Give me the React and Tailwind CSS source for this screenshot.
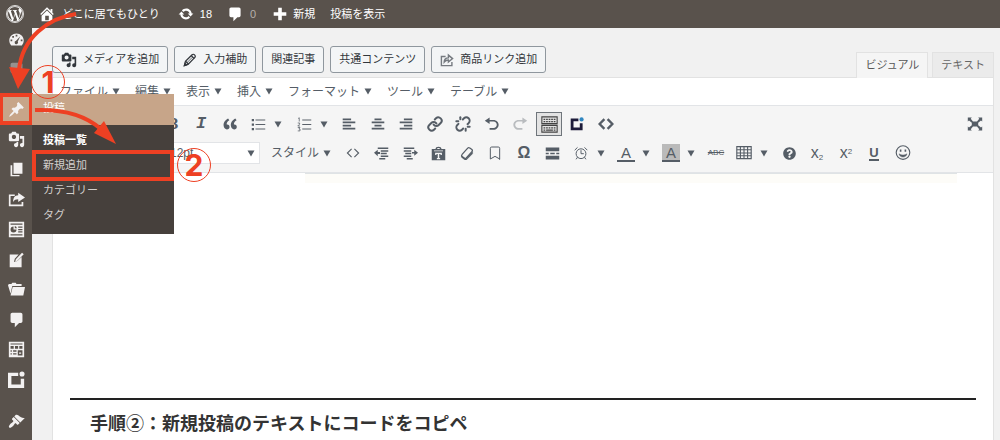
import React from 'react';
import { FaWordpressSimple, FaQuestionCircle } from 'react-icons/fa';
import { Bookmark, Link, Unlink } from 'lucide-react';

const solid = {
    home: 'M16 8.5l1.53 1.53-1.06 1.06L10 4.6l-6.47 6.49-1.06-1.06L10 2.5l4 4v-2h2v4zm-6-2.46l6 5.99V18H4v-5.97zM12 17v-5H8v5h4z',
    update: 'M10.2 3.28c3.53 0 6.43 2.61 6.92 6h2.08l-3.5 4-3.5-4h2.32c-.45-1.97-2.21-3.45-4.32-3.45-1.45 0-2.73.71-3.54 1.78L4.95 5.66C6.23 4.2 8.11 3.28 10.2 3.28zm-.4 13.44c-3.52 0-6.43-2.61-6.92-6H.8l3.5-4 3.5 4H5.48c.45 1.97 2.21 3.45 4.32 3.45 1.45 0 2.73-.71 3.54-1.78l1.71 1.95c-1.28 1.46-3.15 2.38-5.25 2.38z',
    comment: 'M5 2h10c1.1 0 2 .9 2 2v8c0 1.1-.9 2-2 2h-2l-5 5v-5H5c-1.1 0-2-.9-2-2V4c0-1.1.9-2 2-2z',
    plus: 'M8 3h4v5h5v4h-5v5H8v-5H3V8h5z',
    dashboard: 'M3.76 17h12.48c1.34-1.51 2.26-3.5 2.26-5.71C18.5 6.7 14.7 3 10 3S1.5 6.7 1.5 11.29c0 2.21.92 4.2 2.26 5.71zM9 4.5h2v2H9zM5 6h2v2H5zM3 10h2v2H3zM15 10h2v2h-2zM14.5 6.2l-3 6.2a2 2 0 1 1-2-.9z',
    pin: 'M10.44 3.02l1.82-1.82 6.36 6.35-1.83 1.82c-1.05-.68-2.48-.57-3.41.36l-.75.75c-.92.93-1.04 2.35-.35 3.41l-1.83 1.82-2.41-2.41-2.8 2.79c-.42.42-3.38 2.71-3.8 2.29s1.86-3.39 2.28-3.81l2.79-2.79L4.1 9.36l1.83-1.82c1.05.69 2.48.57 3.4-.36l.75-.75c.93-.92 1.05-2.35.36-3.41z',
    media: 'M13 11V4c0-.55-.45-1-1-1h-1.67L9 1H5L3.67 3H2c-.55 0-1 .45-1 1v7c0 .55.45 1 1 1h10c.55 0 1-.45 1-1zM7 4.5c1.38 0 2.5 1.12 2.5 2.5S8.38 9.5 7 9.5 4.5 8.38 4.5 7 5.62 4.5 7 4.5zM14 6h5v10.5c0 1.38-1.12 2.5-2.5 2.5S14 17.88 14 16.5s1.12-2.5 2.5-2.5c.17 0 .34.02.5.05V9h-3V6zm-4 8.05V13h2v3.5c0 1.38-1.12 2.5-2.5 2.5S7 17.88 7 16.5 8.12 14 9.5 14c.17 0 .34.02.5.05z',
    pages: 'M6.500 15V2h10.500v13zM5 16.500h8.500V18H3V5h2z',
    share: 'M1 4h7v2H3v10h13v-3h2v5H1zM12 2l8 5.500-8 5.500v-3.300c-3 0-4.600.8-6 3.300 0-5 2-7.700 6-7.900z',
    profile: 'M1 1h18v18H1zM3 3v1.500h14V3zM3 15.500V17h14v-1.500zM6.500 6.500a3.500 3.500 0 1 0 3.500 3.500H6.500zM8 6v2.500h2.500A3 3 0 0 0 8 6zM12 6.500v1.500h5V6.500zM12 9.300v1.500h5V9.300zM12 12v1.500h5V12z',
    write: 'M2 4h10.500L8 9l-1 4 4-1.200L16 7v12H2zM9.200 9.800l7.300-7.800 2 1.800-7.500 7.600-2.500.9z',
    folder: 'M0 5l1-1.500h3L5 2h4l1 1.500h6V6H5L3 15zM5.500 7H20l-2 10H3z',
    form: 'M1 1h18v18H1zM3 3v1h14V3zM3 6v3h3.700V6zM8.200 6v3h3.700V6zM13.300 6v3H17V6zM3 11v1.500h1.500V11zM6 11v1.500h4V11zM3 14.500V16h1.500v-1.500zM6 14.500V16h4v-1.500zM11.500 11v6H17v-6zM13 13.500h2.500V15H13z',
    block: 'M0 2h12v4H4v10h11V9h4v11H0zM16.500.5a3 3 0 1 1 0 6 3 3 0 0 1 0-6z',
    brush: 'M14.480 11.060L7.410 3.990l1.500-1.500c.5-.56 2.300-.47 3.510.32 1.210.8 1.430 1.280 2.910 2.100 1.180.64 2.450 1.260 4.450.85zm-.71.71L6.700 4.700 4.930 6.470c-.39.39-.39 1.020 0 1.410l1.060 1.060c.39.39.39 1.030 0 1.420-.6.6-1.430 1.110-2.210 1.690-.35.26-.7.53-1.010.84C1.430 14.230.4 16.080 1.400 17.070c.99 1 2.840-.03 4.180-1.360.31-.31.58-.66.85-1.020.57-.78 1.080-1.610 1.690-2.210.39-.39 1.020-.39 1.410 0l1.060 1.060c.39.39 1.020.39 1.410 0z',
    quote: 'M9.490 13.220c0-.74-.2-1.380-.61-1.900-.62-.78-1.830-.88-2.530-.72-.29-1.650 1.110-3.750 2.920-4.650L7.880 4c-2.730 1.300-5.420 4.280-4.960 8.050C3.210 14.430 4.590 16 6.540 16c.85 0 1.560-.25 2.120-.75s.83-1.180.83-2.030zm8.050 0c0-.74-.2-1.380-.61-1.900-.63-.78-1.830-.88-2.530-.72-.29-1.650 1.110-3.750 2.920-4.650L15.930 4c-2.730 1.300-5.410 4.280-4.950 8.050.29 2.380 1.660 3.950 3.610 3.950.85 0 1.560-.25 2.120-.75s.83-1.180.83-2.030z',
    left: 'M1 2h12v2.500H1zM1 6.500h18V9H1zM1 11h12v2.500H1zM1 15.500h18V18H1z',
    center: 'M5 2h10v2.500H5zM1 6.500h18V9H1zM5 11h10v2.500H5zM1 15.500h18V18H1z',
    right: 'M7 2h12v2.500H7zM1 6.500h18V9H1zM7 11h12v2.500H7zM1 15.500h18V18H1z',
    undo: 'M12 5H7V2L1 6l6 4V7h5c2.200 0 4 1.800 4 4s-1.800 4-4 4H7v2.300h5c3.300 0 6.300-3 6.300-6.300S15.300 5 12 5z',
    redo: 'M8 5h5V2l6 4-6 4V7H8c-2.200 0-4 1.800-4 4s1.800 4 4 4h5v2.300H8c-3.300 0-6.300-3-6.300-6.300S4.700 5 8 5z',
    outdent: 'M5 2h14v2H5zM9 5.500h10v2H9zM9 9h8v2H9zM9 12.500h10v2H9zM7 16h8v2H7zM0 9l5-4v3h3v2.500H5v3z',
    indent: 'M1 2h14v2H1zM1 5.500h10v2H1zM3 9h8v2H3zM1 12.500h10v2H1zM5 16h8v2H5zM20 9l-5 4v-3h-3V8h3V5z',
    paste: 'M1 4h5c.3-2 1.500-3 4-3s3.700 1 4 3h5v15H1zM8 4h4c0-1-.8-1.500-2-1.500S8 3 8 4zM4 6v1h12V6zM5.500 9v3h1.800v-1.200H9V16H7.800v1.500h4.400V16H11v-5.200h1.700V12h1.800V9z',
    more: 'M1 2h18v5H1zM1 9h4v2H1zM7 9h6v2H7zM15 9h4v2h-4zM1 13h18v5H1z',
    expand: 'M1 2h5L4.700 3.300 7.500 7h5l2.800-3.700L14 2h5v5l-1.500-1.500-3.500 3v3l3.500 3L19 13v5h-5l1.300-1.300L12.500 13h-5l-2.800 3.700L6 18H1v-5l1.500 1.500 3.500-3v-3l-3.500-3L1 7z',
};

function Icon({ name, className = 'size-4' }) {
    return (
        <svg viewBox="0 0 20 20" className={className} fill="currentColor" fillRule="evenodd" aria-hidden="true">
            <path d={solid[name]} />
        </svg>
    );
}

// outline icons
function Line({ children, className = 'size-4', width = 1.5 }) {
    return (
        <svg viewBox="0 0 20 20" className={className} fill="none" stroke="currentColor" strokeWidth={width} aria-hidden="true">
            {children}
        </svg>
    );
}

function Caret() {
    return (
        <svg viewBox="0 0 8 7" className="w-2 h-[7px] shrink-0" fill="currentColor" aria-hidden="true">
            <path d="M.5.500h7L4 6.500z" />
        </svg>
    );
}

function Pencil() {
    return (
        <Line className="size-3.5" width={1.8}>
            <path d="M2 18l1.500-6L13 2.500c1-1 2.500-.8 3.500.2s1.500 2.500.5 3.500L7.500 16z" />
            <path d="M12 4l4 4M4 12l4 4M2 18l3-1-2-2z" />
            <path d="M5.500 14l8-8" strokeWidth="1" />
        </Line>
    );
}

function ShareBox() {
    return (
        <Line className="size-3.5 text-[#757a80]" width={2}>
            <path d="M8 5H2v13h15v-5" />
            <path d="M6 13c0-4 2-6 6-6V3l6 5-6 5v-3c-3 0-4.500 1-6 3z" />
        </Line>
    );
}

const bulletList = (
    <Line className="size-[15px]" width={1.3}>
        <path d="M6 4h13M6 10h13M6 16h13" />
        <path d="M1 4h3M1 10h3M1 16h3" strokeWidth="3" />
    </Line>
);

const numberList = (
    <Line className="size-[15px]" width={1.3}>
        <path d="M7 4h12M7 10h12M7 16h12" />
        <path d="M1.500 2L3 1v5M1 8h2.500v1.500L1 12h3M1 14h3l-1.500 2H4v2.500H1" strokeWidth="1" />
    </Line>
);

const keyboard = (
    <span className="flex items-center justify-center w-[26px] h-6 border border-[#6f757b] bg-[#e3e3e3] text-[#444]">
        <Line className="size-[17px]" width={1.3}>
            <path d="M1 1h18v8H1zM1 11h18v8H1z" />
            <path d="M3 4h14M3 6.500h14M3 14h14" strokeDasharray="2 1" strokeWidth="1.500" />
            <path d="M3 16.500h2M6 16.500h8M15 16.500h2" strokeWidth="1.500" />
        </Line>
    </span>
);

const blockLogo = (
    <svg viewBox="0 0 20 20" className="size-3.5" aria-hidden="true">
        <path d="M1 2h11v4H5v9h9V9h4v10H1z" fill="#1d1b3a" />
        <circle cx="16.500" cy="3.500" r="3" fill="#2f86c0" />
    </svg>
);

const angle = (width, size) => (
    <Line className={size} width={width}>
        <path d="M8 4l-6 6 6 6M12 4l6 6-6 6" />
    </Line>
);

const eraser = (
    <Line className="size-3.5" width={1.8}>
        <path d="M3 12l8-9c1-1 2-1 3 0l3 2c1 1 1 2 0 3l-8 9c-1 1-2 1-3 0l-3-2c-1-1-1-2 0-3z" />
        <path d="M2 14l5 4h2l9-10v3l-9 9H7l-5-4z" fill="currentColor" strokeWidth="0.500" />
    </Line>
);

const clock = (
    <Line className="size-3.5" width={1.4}>
        <circle cx="10" cy="11" r="7" />
        <path d="M10 6v5h4M1 6l4-4M19 6l-4-4M5 16l-2 3M15 16l2 3" />
    </Line>
);

const table = (
    <Line className="size-4" width={1.4}>
        <path d="M1 2h18v15H1z" />
        <path d="M1 6h18M1 10h18M1 13.500h18M5.500 2v15M10 2v15M14.500 2v15" />
    </Line>
);

const smile = (
    <Line className="size-4" width={1.4}>
        <circle cx="10" cy="9.500" r="8.500" />
        <path d="M5 11c1 5.500 9 5.500 10 0-3 2-7 2-10 0z" fill="currentColor" strokeWidth="0.500" />
        <path d="M7 5.500v3M13 5.500v3" strokeWidth="2" />
    </Line>
);

const toolbarTop = [
    [
        { label: '太字', icon: <b className="text-base font-serif">B</b> },
        { label: 'イタリック', icon: <b className="text-[17px] italic font-['Liberation_Mono',monospace]">I</b> },
    ],
    [
        { label: '引用', icon: <Icon name="quote" className="size-[18px]" /> },
        { label: '番号なしリスト', icon: bulletList, menu: true },
    ],
    [
        { label: '番号付きリスト', icon: numberList, menu: true },
        { label: '左寄せ', icon: <Icon name="left" className="size-3.5" /> },
    ],
    [
        { label: '中央揃え', icon: <Icon name="center" className="size-3.5" /> },
        { label: '右寄せ', icon: <Icon name="right" className="size-3.5" /> },
    ],
    [
        { label: 'リンク', icon: <Link className="size-4" strokeWidth={3} /> },
        { label: 'リンク解除', icon: <Unlink className="size-4" strokeWidth={3} /> },
    ],
    [
        { label: '取り消し', icon: <Icon name="undo" /> },
        { label: 'やり直し', icon: <Icon name="redo" className="size-4 text-[#b9bcbf]" /> },
    ],
    [
        { label: 'ツールバー切り替え', icon: keyboard },
        { label: 'ブロック', icon: blockLogo },
    ],
    [{ label: 'コード', icon: angle(3, 'size-4') }],
];

const toolbarBottom = [
    [
        { label: 'ソースコード', icon: angle(1.6, 'size-3.5') },
        { label: 'インデントを減らす', icon: <Icon name="outdent" className="size-[15px]" /> },
    ],
    [
        { label: 'インデントを増やす', icon: <Icon name="indent" className="size-[15px]" /> },
        { label: 'テキストとしてペースト', icon: <Icon name="paste" className="size-[15px]" /> },
    ],
    [
        { label: '書式設定をクリア', icon: eraser },
        { label: 'アンカー', icon: <Bookmark className="size-4" strokeWidth={1.5} strokeLinejoin="miter" /> },
    ],
    [
        { label: '特殊文字', icon: <b className="text-base">Ω</b> },
        { label: '続きを読む', icon: <Icon name="more" className="size-[15px]" /> },
    ],
    [
        { label: '日時を挿入', icon: clock, menu: true },
        { label: 'テキスト色', icon: <span className="w-[18px] h-[18px] border-b-2 border-current text-[15px] leading-[17px] text-center">A</span>, menu: true },
        { label: '背景色', icon: <span className="w-[18px] h-[18px] border-b-2 border-current bg-[#bababa] text-[15px] leading-[17px] text-center">A</span>, menu: true },
        { label: '取り消し線', icon: <s className="text-[8px]">ABC</s> },
        { label: 'テーブル', icon: table, menu: true },
        { label: 'ヘルプ', icon: <FaQuestionCircle className="size-[13px]" /> },
        { label: '下付き', icon: <span className="text-base leading-4">x<sub className="text-[8px]">2</sub></span> },
    ],
    [
        { label: '上付き', icon: <span className="text-base leading-4">x<sup className="text-[8px]">2</sup></span> },
        { label: '下線', icon: <span className="h-4 border-b-2 border-current text-[13px] leading-4 font-bold">U</span> },
    ],
    [{ label: '絵文字', icon: smile }],
];

function ToolGroups({ groups }) {
    return (
        <div className="flex gap-px">
            {groups.map((group, i) => (
                <div key={i} className="flex">
                    {group.map((tool) => (
                        <button
                            key={tool.label}
                            type="button"
                            aria-label={tool.label}
                            className={`flex items-center h-7 ${tool.menu ? 'w-[45px]' : 'w-7'}`}
                        >
                            <span className="flex items-center justify-center w-7 shrink-0">{tool.icon}</span>
                            {tool.menu && <span className="pl-0.5"><Caret /></span>}
                        </button>
                    ))}
                </div>
            ))}
        </div>
    );
}

function AdminBar() {
    return (
        <header className="flex items-center h-7 pl-1.5 bg-[#59524c] text-white text-[11px]">
            <a href="#wp" aria-label="WordPress" className="flex items-center justify-center size-[18px] rounded-full border border-white/80 mr-3.5">
                <FaWordpressSimple className="size-4" />
            </a>
            <a href="#site" className="flex items-center gap-1.5">
                <Icon name="home" className="size-[18px]" />どこに居てもひとり
            </a>
            <a href="#update" className="flex items-center gap-1.5 ml-[18px]">
                <Icon name="update" />18
            </a>
            <a href="#comments" className="flex items-center gap-[7px] ml-[15px] text-[#b5b0ab]">
                <Icon name="comment" className="size-4 text-white" />0
            </a>
            <a href="#new" className="flex items-center gap-1 ml-[15px]">
                <Icon name="plus" className="size-[18px]" />新規
            </a>
            <a href="#view" className="ml-[15px]">投稿を表示</a>
        </header>
    );
}

const submenu = ['投稿一覧', '新規追加', 'カテゴリー', 'タグ'];

function PostsFlyout() {
    return (
        <div className="absolute left-full top-0 z-10 w-[142px] h-[140px] bg-[#46403c] text-[11px] text-[#d2cfcc]">
            <div className="h-[31px] pl-[11px] leading-7 bg-[#c7a589] text-white">投稿</div>
            <ul className="pt-[3px]">
                {submenu.map((label) => (
                    <li key={label}>
                        <a href="#posts" className={`block pl-[11px] leading-[25px] ${label === '投稿一覧' ? 'font-bold text-white' : ''}`}>{label}</a>
                    </li>
                ))}
            </ul>
            <div className="absolute left-0 top-14 w-full h-[31px] border-4 border-[#ee4023]" />
        </div>
    );
}

const sideItems = ['dashboard', 'faded', 'pin', 'media', 'pages', 'share', 'profile', 'write', 'folder', 'comment', 'form', 'block', 'brush'];

const sideClasses = {
    faded: 'opacity-40',
    pin: 'mt-2.5 bg-[#c7a589] outline-4 -outline-offset-3 outline-[#ee4023]',
    brush: 'mt-3',
};

function SideMenu() {
    return (
        <nav className="w-8 shrink-0 bg-[#59524c] text-[#f3f1f1]">
            <ul className="-mt-1">
                {sideItems.map((name) => (
                    <li key={name} className={`relative ${sideClasses[name] || ''}`}>
                        <a href={`#${name}`} aria-label={name} className="flex items-center justify-center h-[30px]">
                            <Icon name={name === 'faded' ? 'comment' : name} className="size-[17px]" />
                        </a>
                        {name === 'pin' && <PostsFlyout />}
                    </li>
                ))}
            </ul>
        </nav>
    );
}

function MediaButton({ icon, children }) {
    return (
        <button type="button" className="flex items-center gap-1.5 h-[27px] px-2 border border-[#8f979e] rounded-[3px] bg-[#f3f5f6] text-[#32373c] text-[11px] whitespace-nowrap">
            {icon}{children}
        </button>
    );
}

const menus = ['ファイル', '編集', '表示', '挿入', 'フォーマット', 'ツール', 'テーブル'];

function Editor() {
    return (
        <main className="flex-1 min-w-0 flex flex-col pl-5 pr-1.5 pt-[18px]">
            <div className="flex justify-between items-end">
                <div className="flex gap-1.5 pb-1">
                    <MediaButton icon={<Icon name="media" />}>メディアを追加</MediaButton>
                    <MediaButton icon={<Pencil />}>入力補助</MediaButton>
                    <MediaButton>関連記事</MediaButton>
                    <MediaButton>共通コンテンツ</MediaButton>
                    <MediaButton icon={<ShareBox />}>商品リンク追加</MediaButton>
                </div>
                <div className="flex gap-1 text-[11px] text-[#666]">
                    <button type="button" className="relative h-[26px] -mb-px px-2 border border-b-0 border-[#e2e2e2] bg-[#f5f5f5] text-[#555]">ビジュアル</button>
                    <button type="button" className="h-[25px] px-2 border border-b-0 border-[#e2e2e2] bg-[#ebebeb]">テキスト</button>
                </div>
            </div>

            <div className="flex-1 flex flex-col border border-b-0 border-[#e2e2e2] bg-white">
                <div className="flex items-center gap-[15px] h-[27px] pl-[7px] text-xs text-[#555d66]">
                    {menus.map((m) => (
                        <button key={m} type="button" className="flex items-center gap-1">{m}<Caret /></button>
                    ))}
                </div>

                <div className="flex flex-col gap-px pt-1 pb-[5px] pl-[106px] border-y border-[#e2e4e7] bg-[#f5f5f5] text-[#555d66]">
                    <div className="flex items-center justify-between pr-2.5">
                        <ToolGroups groups={toolbarTop} />
                        <button type="button" aria-label="全画面"><Icon name="expand" /></button>
                    </div>
                    <div className="flex items-center">
                        <div className="relative w-[101px]">
                            <select aria-label="フォントサイズ" className="appearance-none block w-full h-[22px] pl-2.5 border border-[#e2e4e7] bg-white text-xs">
                                <option>12pt</option>
                            </select>
                            <span className="absolute right-[5px] top-2 pointer-events-none"><Caret /></span>
                        </div>
                        <button type="button" className="flex items-center gap-1 pl-[11px] pr-2 text-xs">スタイル<Caret /></button>
                        <ToolGroups groups={toolbarBottom} />
                    </div>
                </div>

                <article className="px-[17px] text-[#333]">
                    <div className="ml-[235px] mr-[19px] h-2.5 border-t border-[#dfe3e5] bg-[#fdfcf8]" />
                    <h2 className="mt-[215px] pl-5 pt-[11px] border-t-2 border-[#222] text-lg leading-[26px] font-bold">
                        手順②：新規投稿のテキストにコードをコピペ
                    </h2>
                </article>
            </div>
        </main>
    );
}

// hand-drawn guide marks lying over the page
function Annotations() {
    return (
        <div className="absolute inset-0 z-20 pointer-events-none text-[#ee4023] font-[Inter,sans-serif]">
            <svg viewBox="0 0 240 200" className="absolute left-0 top-0 w-60 h-[200px]" fill="none" stroke="currentColor" strokeWidth="4">
                <path d="M76 14C48 18 22 38 19 70" />
                <path d="M9 67l21 2-12 20z" fill="currentColor" stroke="none" />
                <path d="M35 110C62 109 84 114 101 129" />
                <path d="M104 121l12 23-22-11z" fill="currentColor" stroke="none" />
            </svg>
            <span className="absolute left-[31px] top-[65px] flex items-center justify-center size-[34px] border border-current rounded-full text-[30px] leading-none font-bold">1</span>
            <span className="absolute left-[177px] top-[148px] flex items-center justify-center size-[34px] border border-current rounded-full text-[30px] leading-none font-bold">2</span>
        </div>
    );
}

export default function App() {
    return (
        <div className="relative min-h-screen flex flex-col bg-[#f1f1f1] font-['Liberation_Sans','Noto_Sans_CJK_JP',sans-serif]">
            <AdminBar />
            <div className="flex-1 flex">
                <SideMenu />
                <Editor />
            </div>
            <Annotations />
        </div>
    );
}
